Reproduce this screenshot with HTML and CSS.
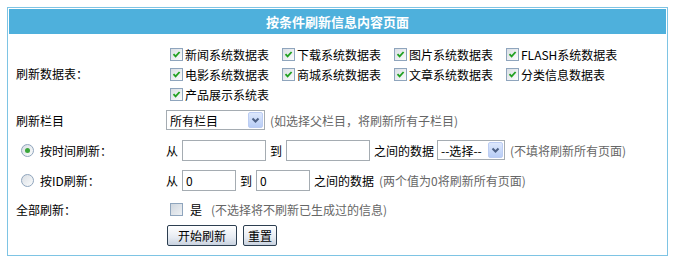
FILE: index.html
```html
<!DOCTYPE html>
<html lang="zh-CN">
<head>
<meta charset="utf-8">
<title>按条件刷新信息内容页面</title>
<link rel="stylesheet" href="styles.css">
</head>
<body>
<div class="panel">
  <div class="title">按条件刷新信息内容页面</div>

  <div class="row r1">
    <div class="label l1">刷新数据表：</div>
    <div class="cbgrid">
      <label class="item"><span class="cb on"><svg viewBox="0 0 11 11" width="11" height="11"><path d="M2.5 5.2 L4.6 7.4 L8.6 3" fill="none" stroke="#21a121" stroke-width="1.8"/></svg></span>新闻系统数据表</label>
      <label class="item"><span class="cb on"><svg viewBox="0 0 11 11" width="11" height="11"><path d="M2.5 5.2 L4.6 7.4 L8.6 3" fill="none" stroke="#21a121" stroke-width="1.8"/></svg></span>下载系统数据表</label>
      <label class="item"><span class="cb on"><svg viewBox="0 0 11 11" width="11" height="11"><path d="M2.5 5.2 L4.6 7.4 L8.6 3" fill="none" stroke="#21a121" stroke-width="1.8"/></svg></span>图片系统数据表</label>
      <label class="item"><span class="cb on"><svg viewBox="0 0 11 11" width="11" height="11"><path d="M2.5 5.2 L4.6 7.4 L8.6 3" fill="none" stroke="#21a121" stroke-width="1.8"/></svg></span>FLASH系统数据表</label>
      <label class="item"><span class="cb on"><svg viewBox="0 0 11 11" width="11" height="11"><path d="M2.5 5.2 L4.6 7.4 L8.6 3" fill="none" stroke="#21a121" stroke-width="1.8"/></svg></span>电影系统数据表</label>
      <label class="item"><span class="cb on"><svg viewBox="0 0 11 11" width="11" height="11"><path d="M2.5 5.2 L4.6 7.4 L8.6 3" fill="none" stroke="#21a121" stroke-width="1.8"/></svg></span>商城系统数据表</label>
      <label class="item"><span class="cb on"><svg viewBox="0 0 11 11" width="11" height="11"><path d="M2.5 5.2 L4.6 7.4 L8.6 3" fill="none" stroke="#21a121" stroke-width="1.8"/></svg></span>文章系统数据表</label>
      <label class="item"><span class="cb on"><svg viewBox="0 0 11 11" width="11" height="11"><path d="M2.5 5.2 L4.6 7.4 L8.6 3" fill="none" stroke="#21a121" stroke-width="1.8"/></svg></span>分类信息数据表</label>
      <label class="item"><span class="cb on"><svg viewBox="0 0 11 11" width="11" height="11"><path d="M2.5 5.2 L4.6 7.4 L8.6 3" fill="none" stroke="#21a121" stroke-width="1.8"/></svg></span>产品展示系统表</label>
    </div>
  </div>

  <div class="row r2">
    <div class="label">刷新栏目</div>
    <div class="value">
      <span class="sel sel-wide"><span class="seltext">所有栏目</span><span class="arrow"><svg viewBox="0 0 13 14" width="13" height="14"><path d="M3.5 5.5 L6.5 8.5 L9.5 5.5" fill="none" stroke="#4d6185" stroke-width="2"/></svg></span></span>
      <span class="hint">(如选择父栏目，将刷新所有子栏目)</span>
    </div>
  </div>

  <div class="row r3">
    <div class="label rlabel"><span class="radio on"><span class="dot"></span></span>按时间刷新：</div>
    <div class="value">
      <span>从</span><span class="txt wide"></span><span>到</span><span class="txt wide"></span><span>之间的数据</span>
      <span class="sel sel-narrow"><span class="seltext">--选择--</span><span class="arrow"><svg viewBox="0 0 13 14" width="13" height="14"><path d="M3.5 5.5 L6.5 8.5 L9.5 5.5" fill="none" stroke="#4d6185" stroke-width="2"/></svg></span></span>
      <span class="hint">(不填将刷新所有页面)</span>
    </div>
  </div>

  <div class="row r4">
    <div class="label rlabel"><span class="radio"></span>按ID刷新：</div>
    <div class="value">
      <span>从</span><span class="txt short">0</span><span>到</span><span class="txt short">0</span><span>之间的数据</span>
      <span class="hint">(两个值为0将刷新所有页面)</span>
    </div>
  </div>

  <div class="row r5">
    <div class="label">全部刷新：</div>
    <div class="value">
      <span class="cb off"></span><span class="yes">是</span><span class="hint">(不选择将不刷新已生成过的信息)</span>
    </div>
  </div>

  <div class="row r6">
    <div class="label"></div>
    <div class="value">
      <span class="btn b1">开始刷新</span><span class="btn b2">重置</span>
    </div>
  </div>
</div>
</body>
</html>
```

FILE: styles.css
```css
body {
  margin: 0;
  background: #fff;
  color: #000;
  font: 12px "Noto Sans CJK SC", "DejaVu Sans", sans-serif;
}

.panel {
  margin: 7px;
  width: 657px;
  border: 1px solid #7ec4e4;
  padding: 1px;
}

.title {
  height: 25px;
  line-height: 25px;
  margin-bottom: 1px;
  background: #4eb0dc;
  color: #fff;
  font-weight: bold;
  font-size: 13px;
  text-align: center;
}

.row {
  display: flex;
  align-items: center;
}

.label {
  flex: none;
  width: 157px;
  box-sizing: border-box;
  padding-left: 7px;
}

.value {
  display: flex;
  align-items: center;
}

.r1 {
  align-items: flex-start;
  padding: 9px 0 1px;
}

.l1 {
  padding-top: 20px;
  line-height: 20px;
}

.r2, .r3, .r4 { height: 30px; }
.r5 { height: 29px; }
.r6 {
  height: 29px;
  align-items: flex-start;
  padding-top: 1px;
}

.cbgrid {
  display: grid;
  grid-template-columns: repeat(4, 112px);
}

.item {
  display: flex;
  align-items: center;
  height: 20px;
  white-space: nowrap;
}

.cb {
  flex: none;
  width: 11px;
  height: 11px;
  border: 1px solid #8fa5bd;
  margin: 0 2px 0 4px;
  background: linear-gradient(135deg, #d9dee4, #fbfcfc);
  display: flex;
}

.cb.off {
  margin: 0 7px 0 4px;
  background: linear-gradient(135deg, #cfd6de, #eef1f4);
}

.yes { margin-right: 4px; }

.rlabel {
  display: flex;
  align-items: center;
  padding-left: 12px;
}

.radio {
  flex: none;
  width: 11px;
  height: 11px;
  border: 1px solid #8fa5bd;
  border-radius: 50%;
  margin-right: 6px;
  background: linear-gradient(135deg, #d9dee4, #fbfcfc);
  display: flex;
  align-items: center;
  justify-content: center;
}

.dot {
  width: 5px;
  height: 5px;
  border-radius: 50%;
  background: #3aa63a;
}

.txt {
  height: 21px;
  box-sizing: border-box;
  border: 1px solid #a5acb2;
  margin: 0 4px;
  padding: 0 3px;
  line-height: 19px;
  background: #fff;
}

.txt.wide { width: 84px; }
.txt.short { width: 54px; }

.sel {
  display: flex;
  align-items: center;
  justify-content: space-between;
  height: 20px;
  box-sizing: border-box;
  border: 1px solid #a5acb2;
  padding-left: 3px;
  background: #fff;
}

.sel-wide { width: 99px; }
.sel-narrow { width: 68px; margin-left: 3px; }

.arrow {
  width: 15px;
  height: 16px;
  box-sizing: border-box;
  margin-right: 1px;
  border: 1px solid #bccdf3;
  border-radius: 2px;
  background: linear-gradient(#dde8fc, #b8cdf6);
  display: flex;
  align-items: center;
  justify-content: center;
}

.hint {
  color: #666;
  margin-left: 5px;
}

.btn {
  height: 21px;
  box-sizing: border-box;
  border: 1px solid #2c3e50;
  border-radius: 2px;
  background: linear-gradient(#ffffff, #e6ebf2 60%, #c9d2df);
  display: flex;
  align-items: center;
  justify-content: center;
}

.b1 { width: 70px; margin-left: 1px; }
.b2 { width: 34px; margin-left: 6px; }
```
